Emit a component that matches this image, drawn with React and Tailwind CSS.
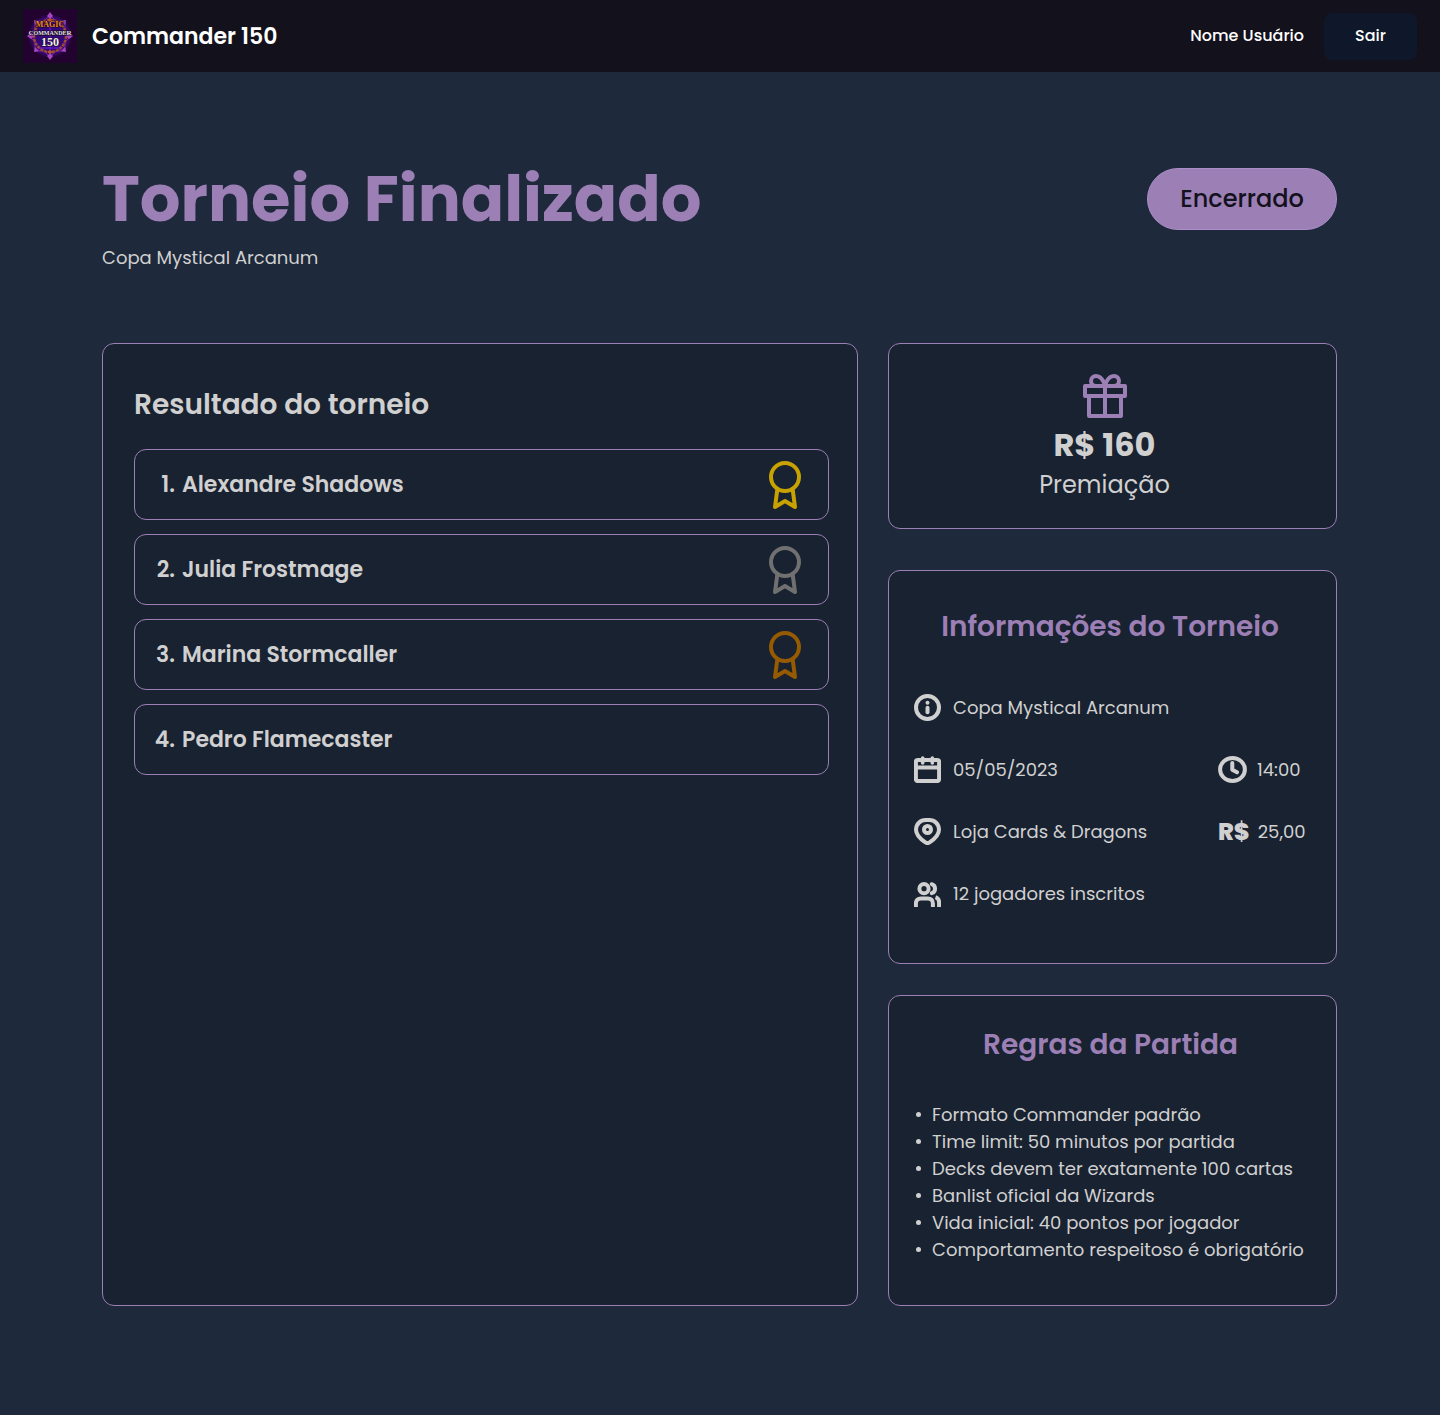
import React from "react";

const players = [
  { name: "Alexandre Shadows", medal: "text-[#c8a200]" },
  { name: "Julia Frostmage", medal: "text-[#707070]" },
  { name: "Marina Stormcaller", medal: "text-[#965a00]" },
  { name: "Pedro Flamecaster", medal: null },
];

const rules = [
  "Formato Commander padrão",
  "Time limit: 50 minutos por partida",
  "Decks devem ter exatamente 100 cartas",
  "Banlist oficial da Wizards",
  "Vida inicial: 40 pontos por jogador",
  "Comportamento respeitoso é obrigatório",
];

function Logo() {
  return (
    <svg viewBox="0 0 54 54" className="size-[54px] shrink-0" role="img" aria-label="Magic Commander 150">
      <defs>
        <radialGradient id="glow">
          <stop offset="0" stopColor="#5a12b8" />
          <stop offset="0.7" stopColor="#4a0a9c" />
          <stop offset="1" stopColor="#22032f" />
        </radialGradient>
      </defs>
      <rect width="54" height="54" fill="#22032f" />
      <circle cx="27" cy="27" r="22" fill="url(#glow)" />
      <g fill="none" stroke="#7a2a9c" strokeWidth="1">
        <path d="M12 12H42V42H12Z" />
        <path d="M27 6L48 27L27 48L6 27Z" />
      </g>
      <circle cx="27" cy="27" r="16" fill="#35087a" stroke="#9c4a2c" strokeWidth="2.500" strokeDasharray="3 1" />
      <path d="M27 12V42M16 39L38 39" stroke="#7420d8" strokeWidth="1" />
      <g fill="#a646c0">
        <path d="M27 3l3 4-3 3-3-3zM27 51l3-4-3-3-3 3zM4 27l4-3 3 3-3 3zM50 27l-4-3-3 3 3 3z" />
        <path d="M11 11l5 1-4 4zM43 11l-5 1 4 4zM11 43l5-1-4-4zM43 43l-5-1 4-4z" />
      </g>
      <g fill="#b0552c">
        <path d="M27 9l3 2-3 2-3-2zM27 45l3-2-3-2-3 2z" />
      </g>
      <g textAnchor="middle" fontFamily="Liberation Serif, serif" fontWeight="700" stroke="#16051f" strokeWidth="1" paintOrder="stroke">
        <text x="27" y="18" fontSize="8" fill="#f08a24">MAGIC</text>
        <text x="27" y="26" fontSize="7" fill="#e6e2ea">
          C<tspan fontSize="6">OMMANDE</tspan>R
        </text>
        <text x="27" y="37" fontSize="12" fill="#f4f0e8">150</text>
      </g>
    </svg>
  );
}

function AwardIcon({ className }) {
  return (
    <svg viewBox="0 0 24 24" className={`size-12 shrink-0 ${className}`} fill="none" stroke="currentColor" strokeWidth="2" strokeLinecap="round" strokeLinejoin="round" aria-hidden="true">
      <circle cx="12" cy="8" r="7" />
      <path d="M8.210 13.890L7 23l5-3 5 3-1.210-9.120" />
    </svg>
  );
}

function GiftIcon() {
  return (
    <svg viewBox="0 0 24 24" className="size-12 text-[#9b7fb5]" fill="none" stroke="currentColor" strokeWidth="2" strokeLinecap="round" strokeLinejoin="round" aria-hidden="true">
      <path d="M20 12v10H4V12" />
      <path d="M2 7h20v5H2z" />
      <path d="M12 22V7" />
      <path d="M12 7H7.500a2.500 2.500 0 0 1 0-5C11 2 12 7 12 7z" />
      <path d="M12 7h4.500a2.500 2.500 0 0 0 0-5C13 2 12 7 12 7z" />
    </svg>
  );
}

function InfoGlyph({ children, wide }) {
  return (
    <svg viewBox={wide ? "0 0 29 27" : "0 0 27 27"} className={wide ? "h-[27px] w-[29px] shrink-0" : "size-[27px] shrink-0"} fill="none" stroke="currentColor" strokeWidth="4" strokeLinecap="round" strokeLinejoin="round" aria-hidden="true">
      {children}
    </svg>
  );
}

function InfoIcon() {
  return (
    <InfoGlyph>
      <circle cx="13.500" cy="13.500" r="11.500" />
      <path d="M13.500 13.800v4.500" />
      <circle cx="13.500" cy="8.800" r="2" fill="currentColor" stroke="none" />
    </InfoGlyph>
  );
}

function CalendarIcon() {
  return (
    <InfoGlyph>
      <rect x="1.900" y="3.900" width="23.200" height="21.200" rx="2" />
      <path d="M2 11.500h23" />
      <path d="M8.700 2v5M18.300 2v5" strokeWidth="3.600" />
    </InfoGlyph>
  );
}

function PinIcon() {
  return (
    <InfoGlyph>
      <path d="M25 11.800c0 4.800-5.200 9.800-9.400 12.600-1.300.9-2.900.9-4.200 0C7.200 21.600 2 16.600 2 11.800 2 6 6.500 2 11.500 2h4C20.500 2 25 6 25 11.800z" />
      <circle cx="13.500" cy="11.500" r="3.500" />
    </InfoGlyph>
  );
}

function UsersIcon() {
  return (
    <InfoGlyph>
      <circle cx="10" cy="8.700" r="4.600" />
      <path d="M17.700 4.200a4.700 4.700 0 0 1 0 9" />
      <path d="M1.900 27v-3.600c0-3 2-5 5-5h7c3 0 5 2 5 5V27" strokeLinecap="butt" />
      <path d="M21.500 17.200c2.400.8 3.600 2.800 3.600 5.400V27" strokeLinecap="butt" />
    </InfoGlyph>
  );
}

function ClockIcon() {
  return (
    <InfoGlyph wide>
      <ellipse cx="14.500" cy="13.500" rx="12.400" ry="11.500" />
      <path d="M14.300 7v6.700l4.700 2.600" />
    </InfoGlyph>
  );
}

function Card({ className = "", children }) {
  return <section className={`rounded-xl border border-[#9b7fb5] bg-[#192230] ${className}`}>{children}</section>;
}

function InfoItem({ icon, className = "", children }) {
  return (
    <div className={`flex h-[27px] items-center whitespace-nowrap ${className}`}>
      {icon}
      <span>{children}</span>
    </div>
  );
}

export default function App() {
  return (
    <div className="min-h-screen bg-[#1e293b] font-['Poppins','Inter',sans-serif] text-[#d0d0d0]">
      <header className="flex h-[72px] items-center justify-between bg-[#13111c] px-[23px] text-white">
        <div className="flex items-center gap-[15px]">
          <Logo />
          <span className="text-[22px] font-semibold">Commander 150</span>
        </div>
        <div className="flex items-center gap-5">
          <span className="text-base font-medium">Nome Usuário</span>
          <button type="button" className="h-[47px] w-[93px] rounded-lg bg-[#0f172a] text-base font-medium">Sair</button>
        </div>
      </header>

      <main className="pt-[87px] pr-[103px] pb-[109px] pl-[102px]">
        <div className="mb-[72px] flex items-start justify-between">
          <div>
            <h1 className="text-[64px] leading-[80px] font-bold text-[#9b7fb5]">Torneio Finalizado</h1>
            <p className="mt-[5px] text-lg leading-[27px]">Copa Mystical Arcanum</p>
          </div>
          <span className="mt-[9px] flex h-[62px] w-[190px] items-center justify-center rounded-full border border-[#ab8dc7] bg-[#9b7fb5] text-2xl font-medium text-[#13111c]">
            Encerrado
          </span>
        </div>

        <div className="grid grid-cols-[756fr_449fr] gap-[30px]">
          <Card className="pt-10 pr-7 pl-[31px]">
            <h2 className="mb-[23px] text-[28px] leading-[42px] font-semibold">Resultado do torneio</h2>
            <ol className="flex flex-col gap-[14px]">
              {players.map((player, index) => (
                <li key={player.name} className="flex h-[71px] items-center rounded-xl border border-[#9b7fb5] pr-[19px] pl-4 text-[22px] font-semibold">
                  <span className="w-6 text-right">{index + 1}.</span>
                  <span className="ml-[7px] flex-1">{player.name}</span>
                  {player.medal && <AwardIcon className={player.medal} />}
                </li>
              ))}
            </ol>
          </Card>

          <div className="flex flex-col">
            <Card className="flex flex-col items-center pt-7 pr-4 pb-7">
              <GiftIcon />
              <p className="text-[32px] leading-[50px] font-bold">R$ 160</p>
              <p className="text-2xl leading-[30px]">Premiação</p>
            </Card>

            <Card className="mt-[41px] pt-[35px] pr-[30px] pb-14 pl-[25px]">
              <h2 className="mb-[46px] text-center text-[28px] leading-[42px] font-semibold text-[#9b7fb5]">Informações do Torneio</h2>
              <div className="flex flex-col gap-[35px] text-lg leading-[27px]">
                <InfoItem icon={<InfoIcon />} className="gap-3">Copa Mystical Arcanum</InfoItem>
                <div className="flex justify-between">
                  <InfoItem icon={<CalendarIcon />} className="gap-3">05/05/2023</InfoItem>
                  <InfoItem icon={<ClockIcon />} className="w-[88px] gap-[10px]">14:00</InfoItem>
                </div>
                <div className="flex justify-between">
                  <InfoItem icon={<PinIcon />} className="gap-3">Loja Cards &amp; Dragons</InfoItem>
                  <InfoItem icon={<span className="text-2xl font-extrabold">R$</span>} className="w-[88px] gap-2">25,00</InfoItem>
                </div>
                <InfoItem icon={<UsersIcon />} className="gap-3">12 jogadores inscritos</InfoItem>
              </div>
            </Card>

            <Card className="mt-[31px] pt-7 pr-[29px] pb-[42px] pl-[25px]">
              <h2 className="mb-[35px] text-center text-[28px] leading-[42px] font-semibold text-[#9b7fb5]">Regras da Partida</h2>
              <ul className="text-lg leading-[27px]">
                {rules.map((rule) => (
                  <li key={rule} className="flex items-center whitespace-nowrap before:mr-[11px] before:ml-[2px] before:size-[5px] before:rounded-full before:bg-current">
                    {rule}
                  </li>
                ))}
              </ul>
            </Card>
          </div>
        </div>
      </main>
    </div>
  );
}
